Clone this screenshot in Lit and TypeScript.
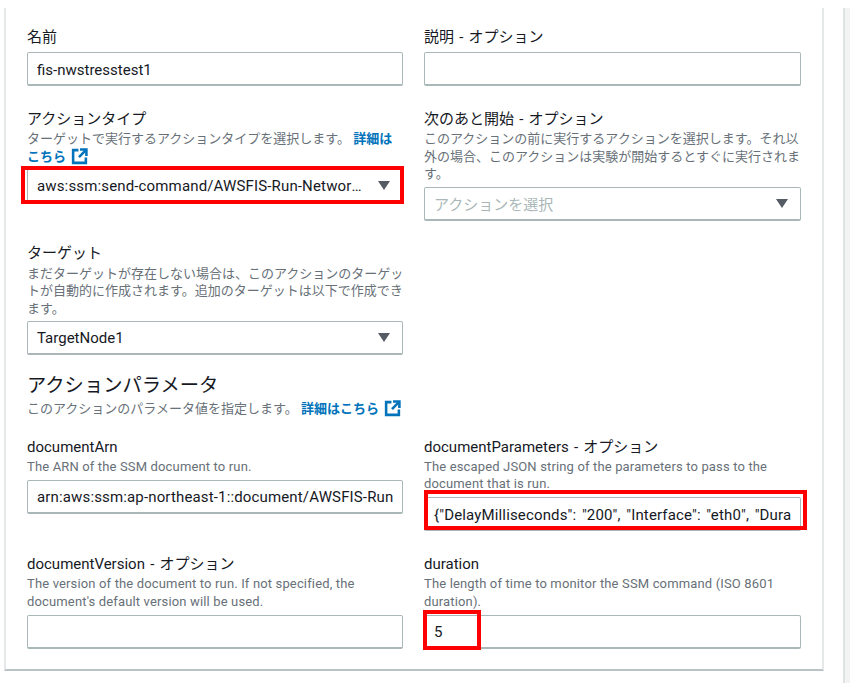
import { LitElement, html, css } from "lit";
import { customElement } from "lit/decorators.js";

const ext = html`<svg class="ext" viewBox="0 0 16 16" width="17" height="17" fill="none" stroke="#0073bb" stroke-width="2.4"><path d="M7 2H2v12h12V9"/><path d="M8.5 1.5h6v6"/><path d="M14 2L7.5 8.5"/></svg>`;

@customElement("app-root")
export class AppRoot extends LitElement {
  static styles = css`
    :host { display: block; width: 850px; height: 683px; overflow: hidden; background: #fff; font-family: Roboto, "Noto Sans CJK JP", sans-serif; color: #16191f; }
    .page { display: flex; height: 683px; }
    .card { box-sizing: border-box; margin: 8px 0 0 4px; width: 820px; height: 663px; border-left: 2px solid #e4e8e9; border-right: 2px solid #e4e8e9; border-bottom: 2px solid #b9c2c7; padding: 18px 20px 0 21px; }
    .stripe { margin: 8px 0 0 19px; width: 7px; background: #f2f3f3; border-left: 2px solid #e0e3e3; box-sizing: border-box; }
    .grid { display: grid; grid-template-columns: 376px 377px; column-gap: 21px; align-items: start; }
    .row { margin-bottom: 22px; }
    .last { margin-bottom: 23px; }
    label { display: block; font-size: 15px; line-height: 20px; word-spacing: 1.5px; padding: 0.5px 0; }
    .desc { font-size: 13px; line-height: 17.5px; color: #687078; margin: 1px -1.5px 0 0; }
    .en { font-size: 13px; letter-spacing: 0.15px; }
    .desc a { color: #0073bb; font-weight: 700; text-decoration: none; }
    .ext { vertical-align: -4px; margin-left: 2px; }
    .box { position: relative; box-sizing: border-box; height: 34px; margin-top: 5px; border: 1px solid #aab7b8; border-bottom-width: 2px; border-radius: 2px; background: #fff; display: flex; align-items: center; padding: 0 9px; font-size: 15px; white-space: nowrap; }
    .desc + .box { margin-top: 4px; }
    .doc label { padding: 0; }
    .doc .desc + .box { margin-top: 4.5px; }
    .value { flex: 1; overflow: hidden; min-width: 0; }
    .input .value { padding-top: 2px; }
    .ellipsis { text-overflow: ellipsis; }
    .long { letter-spacing: 0.15px; }
    .json { letter-spacing: 0.15px; word-spacing: 1.7px; }
    .ph { color: #aab7b8; }
    .caret { width: 0; height: 0; border-left: 6px solid transparent; border-right: 6px solid transparent; border-top: 9px solid #545b64; margin: 0 3px 0 14px; flex: none; }
    .mark { position: absolute; border: 4px solid #f00; pointer-events: none; box-sizing: border-box; }
    .m1 { left: -7px; right: -2px; top: -4px; bottom: -3px; }
    .m2 { left: -1px; right: -7px; top: -8px; bottom: -1px; }
    .m3 { left: -2px; width: 58px; top: -6px; bottom: -3px; }
    h2 { font-size: 19.3px; line-height: 26px; font-weight: 400; margin: -4px 0 0; }
    .section-desc { margin: 1px 0 19px; }
  `;

  render() {
    return html`<div class="page">
      <div class="card">
        <div class="grid row">
          <div><label>名前</label><div class="box input"><span class="value">fis-nwstresstest1</span></div></div>
          <div><label>説明 - オプション</label><div class="box input"></div></div>
        </div>
        <div class="grid row">
          <div>
            <label>アクションタイプ</label>
            <div class="desc">ターゲットで実行するアクションタイプを選択します。 <a>詳細はこちら ${ext}</a></div>
            <div class="box"><span class="value ellipsis long">aws:ssm:send-command/AWSFIS-Run-Network-Latency</span><i class="caret"></i><i class="mark m1"></i></div>
          </div>
          <div>
            <label>次のあと開始 - オプション</label>
            <div class="desc">このアクションの前に実行するアクションを選択します。それ以外の場合、このアクションは実験が開始するとすぐに実行されます。</div>
            <div class="box"><span class="value ph">アクションを選択</span><i class="caret"></i></div>
          </div>
        </div>
        <div class="grid row">
          <div>
            <label>ターゲット</label>
            <div class="desc">まだターゲットが存在しない場合は、このアクションのターゲットが自動的に作成されます。追加のターゲットは以下で作成できます。</div>
            <div class="box"><span class="value">TargetNode1</span><i class="caret"></i></div>
          </div>
        </div>
        <h2>アクションパラメータ</h2>
        <div class="desc section-desc">このアクションのパラメータ値を指定します。 <a>詳細はこちら ${ext}</a></div>
        <div class="grid row last doc">
          <div>
            <label>documentArn</label>
            <div class="desc en">The ARN of the SSM document to run.</div>
            <div class="box input"><span class="value long">arn:aws:ssm:ap-northeast-1::document/AWSFIS-Run</span></div>
          </div>
          <div>
            <label>documentParameters - オプション</label>
            <div class="desc en">The escaped JSON string of the parameters to pass to the document that is run.</div>
            <div class="box input"><span class="value json">{"DelayMilliseconds": "200", "Interface": "eth0", "Dura</span><i class="mark m2"></i></div>
          </div>
        </div>
        <div class="grid doc">
          <div>
            <label>documentVersion - オプション</label>
            <div class="desc en">The version of the document to run. If not specified, the document's default version will be used.</div>
            <div class="box input"></div>
          </div>
          <div>
            <label>duration</label>
            <div class="desc en">The length of time to monitor the SSM command (ISO 8601 duration).</div>
            <div class="box input"><span class="value">5</span><i class="mark m3"></i></div>
          </div>
        </div>
      </div>
      <div class="stripe"></div>
    </div>`;
  }
}
